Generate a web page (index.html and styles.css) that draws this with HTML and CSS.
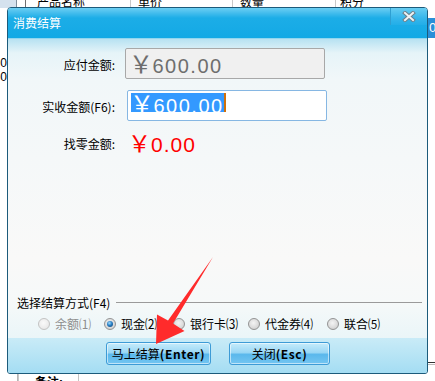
FILE: index.html
```html
<!DOCTYPE html>
<html lang="zh-CN">
<head>
<meta charset="utf-8">
<title>消费结算</title>
<link rel="stylesheet" href="styles.css">
</head>
<body>
<div class="app">
  <div class="grid-head">
    <span class="rh"></span>
    <span class="c c1"></span>
    <span class="c c2">产品名称</span>
    <span class="c c3">单价</span>
    <span class="c c4">数量</span>
    <span class="c c5">积分</span>
  </div>
  <div class="mid">
    <div class="lcol"><span>0</span><span>0</span></div>
    <div class="rcol"><span class="bluecell">0</span><span class="rline"></span></div>
  </div>
  <div class="foot"><div class="memo"><span>备注:</span></div></div>

  <div class="dialog">
    <div class="titlebar">
      <span class="title">消费结算</span>
      <span class="close">
        <svg width="14" height="11" viewBox="0 0 14 11">
          <path d="M3 2 L11 9 M11 2 L3 9" stroke="#6b7f8a" stroke-width="4" stroke-linecap="square" fill="none"/>
          <path d="M3 2 L11 9 M11 2 L3 9" stroke="#eef3f5" stroke-width="2" stroke-linecap="square" fill="none"/>
        </svg>
      </span>
    </div>
    <div class="body">
      <div class="form">
        <span class="lbl">应付金额:</span>
        <div class="box box-ro"><span class="amt"><span class="yen">￥</span>600.00</span></div>
        <span class="lbl">实收金额(F6):</span>
        <div class="box box-edit"><span class="amt sel"><span class="yen">￥</span>600.00</span><span class="caret"></span></div>
        <span class="lbl">找零金额:</span>
        <div class="change"><span class="yen">￥</span>0.00</div>
      </div>
      <div class="spacer"></div>
      <div class="group">
        <div class="legend"><span class="legend-text">选择结算方式(F4)</span><span class="rule"></span></div>
        <div class="radios">
          <span class="opt disabled"><span class="radio"></span><span>余额⑴</span></span>
          <span class="opt"><span class="radio checked"></span><span>现金⑵</span></span>
          <span class="opt"><span class="radio"></span><span>银行卡⑶</span></span>
          <span class="opt"><span class="radio"></span><span>代金券⑷</span></span>
          <span class="opt"><span class="radio"></span><span>联合⑸</span></span>
        </div>
      </div>
    </div>
    <div class="footer">
      <button class="btn btn-ok">马上结算<span class="en">(Enter)</span></button>
      <button class="btn btn-close">关闭<span class="en">(Esc)</span></button>
    </div>
  </div>

  <svg class="arrow" width="435" height="381" viewBox="0 0 435 381">
    <polygon points="213,257 173,323.6 184.5,331 156,344 157,314.5 168,320.4" fill="#ff2b2b"/>
  </svg>
</div>
</body>
</html>
```
FILE: styles.css
```css
* { box-sizing: border-box; }
body {
  margin: 0;
  background: #fff;
  font-family: "Noto Sans CJK SC", "Noto Sans", sans-serif;
  font-size: 12px;
  color: #000;
}
.app {
  position: relative;
  width: 435px;
  height: 381px;
  overflow: hidden;
  display: flex;
  flex-direction: column;
}

/* background application */
.grid-head {
  display: flex;
  height: 8px;
  overflow: hidden;
  flex-shrink: 0;
}
.grid-head .rh {
  width: 17px;
  background: #d5e2ee;
  border-right: 1px solid #7f8f9c;
}
.grid-head .c {
  display: flex;
  align-items: flex-end;
  line-height: 12px;
  height: 8px;
  border-right: 1px solid #c9c9c9;
  white-space: nowrap;
}
.grid-head .c1 { width: 9px; border-right-color: #6f6f6f; }
.grid-head .c2 { width: 105px; padding-left: 11px; }
.grid-head .c3 { width: 102px; padding-left: 7px; }
.grid-head .c4 { width: 103px; padding-left: 7px; }
.grid-head .c5 { flex: 1; padding-left: 4px; border-right: 0; }

.mid {
  flex: 1;
  display: flex;
  justify-content: space-between;
}
.lcol {
  width: 7px;
  padding-top: 48px;
  display: flex;
  flex-direction: column;
  align-items: flex-end;
  font-family: "Liberation Sans", sans-serif;
  font-size: 12px;
  line-height: 14px;
}
.rcol {
  width: 8px;
  display: flex;
  flex-direction: column;
}
.bluecell {
  margin-top: 10px;
  height: 20px;
  background: #2a8fd8;
  color: #fff;
  font-family: "Liberation Sans", sans-serif;
  font-size: 13px;
  line-height: 20px;
  padding-left: 2px;
}
.rline {
  margin-top: 324px;
  height: 3px;
  border-top: 1px solid #333;
  border-bottom: 1px solid #bbb;
}
.foot {
  height: 7px;
  flex-shrink: 0;
  display: flex;
}
.memo {
  margin-left: 17px;
  width: 62px;
  border-left: 1px solid #b5b5b5;
  border-right: 1px solid #c4c4c4;
  box-shadow: inset 3px 0 0 -2px #c8c8c8;
  padding-left: 17px;
  padding-top: 2px;
  line-height: 12px;
  overflow: hidden;
  font-weight: bold;
}

/* dialog window */
.dialog {
  position: absolute;
  left: 7px;
  top: 7px;
  width: 421px;
  height: 367px;
  border: 1px solid #1c5b7b;
  border-radius: 4px 4px 3px 3px;
  display: flex;
  flex-direction: column;
  overflow: hidden;
  background: #f7f9f9;
}
.titlebar {
  height: 31px;
  flex-shrink: 0;
  display: flex;
  align-items: flex-start;
  justify-content: space-between;
  background: linear-gradient(#6ccff3 0, #4cc0ee 4px, #1cade7 10px, #13a9e5 100%);
  border-bottom: 1px solid #92d6ef;
}
.title {
  align-self: center;
  margin-left: 5px;
  color: #fff;
  font-size: 12px;
  line-height: 14px;
}
.close {
  width: 37px;
  height: 17px;
  display: flex;
  align-items: center;
  justify-content: center;
  border-left: 1px solid #2e9fd2;
  background: linear-gradient(#67cdf2, #36b6eb 60%, #22aee8);
}
.body {
  flex: 1;
  display: flex;
  flex-direction: column;
  padding-top: 9px;
  background: linear-gradient(#b7e2f2 0, #e6f4f8 14px, #f1f7f9 40px, #f5f8f9 120px, #f9f9f8 220px, #f6f9f9 262px, #eaf5f8 299px);
}
.form {
  display: grid;
  grid-template-columns: 107px 202px;
  grid-template-rows: 31px 31px 21px;
  column-gap: 10px;
  row-gap: 11px;
}
.lbl {
  justify-self: end;
  align-self: center;
  padding-top: 3px;
  line-height: 14px;
  white-space: nowrap;
}
.box {
  border-radius: 2px;
  display: flex;
  align-items: flex-start;
}
.box-ro {
  width: 200px;
  background: #f0f0f0;
  border: 1px solid #a8a8a8;
  padding: 4px 0 0 3px;
}
.box-edit {
  width: 200px;
  margin-left: 2px;
  background: #fff;
  border: 1px solid #86b7e3;
  padding: 2px 0 0 3px;
}
.amt {
  font-family: "Liberation Sans", sans-serif;
  font-size: 20px;
  line-height: 19px;
  height: 19px;
  letter-spacing: 1.5px;
  color: #6e6e6e;
  white-space: nowrap;
}
.yen {
  font-family: "Noto Sans CJK SC", sans-serif;
  font-size: 24px;
  letter-spacing: -0.5px;
}
.amt.sel {
  background: #3399ff;
  color: #fff;
  display: inline-block;
}
.amt.sel .yen { margin-left: -1px; }
.caret {
  width: 2px;
  height: 19px;
  background: #d0700c;
}
.change {
  margin-left: 3px;
  font-family: "Liberation Sans", sans-serif;
  font-size: 21px;
  line-height: 21px;
  letter-spacing: 1px;
  color: #ff0000;
  white-space: nowrap;
}
.change .yen {
  font-size: 23px;
  letter-spacing: 0;
}
.spacer { flex: 1; }

.group { padding-bottom: 6px; }
.legend {
  display: flex;
  align-items: center;
  padding: 0 5px 0 9px;
  height: 14px;
  margin-bottom: 6px;
}
.legend-text { line-height: 14px; white-space: nowrap; }
.rule {
  flex: 1;
  height: 1px;
  margin-left: 6px;
  margin-top: -1px;
  background: #9a9a9a;
}
.radios {
  display: grid;
  grid-template-columns: 66px 69px 75px 79px auto;
  padding-left: 30px;
  height: 16px;
  align-items: center;
}
.opt {
  display: flex;
  align-items: center;
  gap: 5px;
  white-space: nowrap;
  line-height: 16px;
}
.opt.disabled { color: #8d8d8d; }
.radio {
  width: 12px;
  height: 12px;
  border-radius: 50%;
  border: 1px solid #939393;
  background: radial-gradient(circle at 45% 40%, #f4f4f4 0, #dcdcdc 55%, #c6c6c6 100%);
  display: flex;
  align-items: center;
  justify-content: center;
  flex-shrink: 0;
}
.opt.disabled .radio {
  border-color: #c3c3c3;
  background: radial-gradient(circle at 45% 40%, #fafafa 0, #ececec 60%, #dedede 100%);
}
.radio.checked::after {
  content: "";
  width: 6px;
  height: 6px;
  border-radius: 50%;
  background: radial-gradient(circle at 40% 35%, #9fdcff 0, #2a7fc4 45%, #0b3a66 100%);
}

.footer {
  height: 35px;
  flex-shrink: 0;
  display: flex;
  justify-content: center;
  align-items: flex-start;
  gap: 18px;
  padding-top: 4px;
  background: linear-gradient(#c9ebf7, #a4ddf3);
}
.btn {
  height: 23px;
  border: 1px solid #3d9bd6;
  border-radius: 3px;
  box-shadow: inset 0 0 0 1px rgba(255, 255, 255, 0.55);
  background: linear-gradient(#c6ecfb 0, #9ad7f5 45%, #5ab8ec 55%, #74c6f1 100%);
  font-family: "Noto Sans CJK SC", sans-serif;
  font-size: 12px;
  line-height: 14px;
  color: #000;
  padding: 0;
  white-space: nowrap;
}
.btn-ok { width: 105px; margin-left: 1px; }
.btn-close { width: 101px; }
.en {
  font-weight: bold;
  letter-spacing: 0.6px;
}

.arrow {
  position: absolute;
  left: 0;
  top: 0;
  pointer-events: none;
}
```
